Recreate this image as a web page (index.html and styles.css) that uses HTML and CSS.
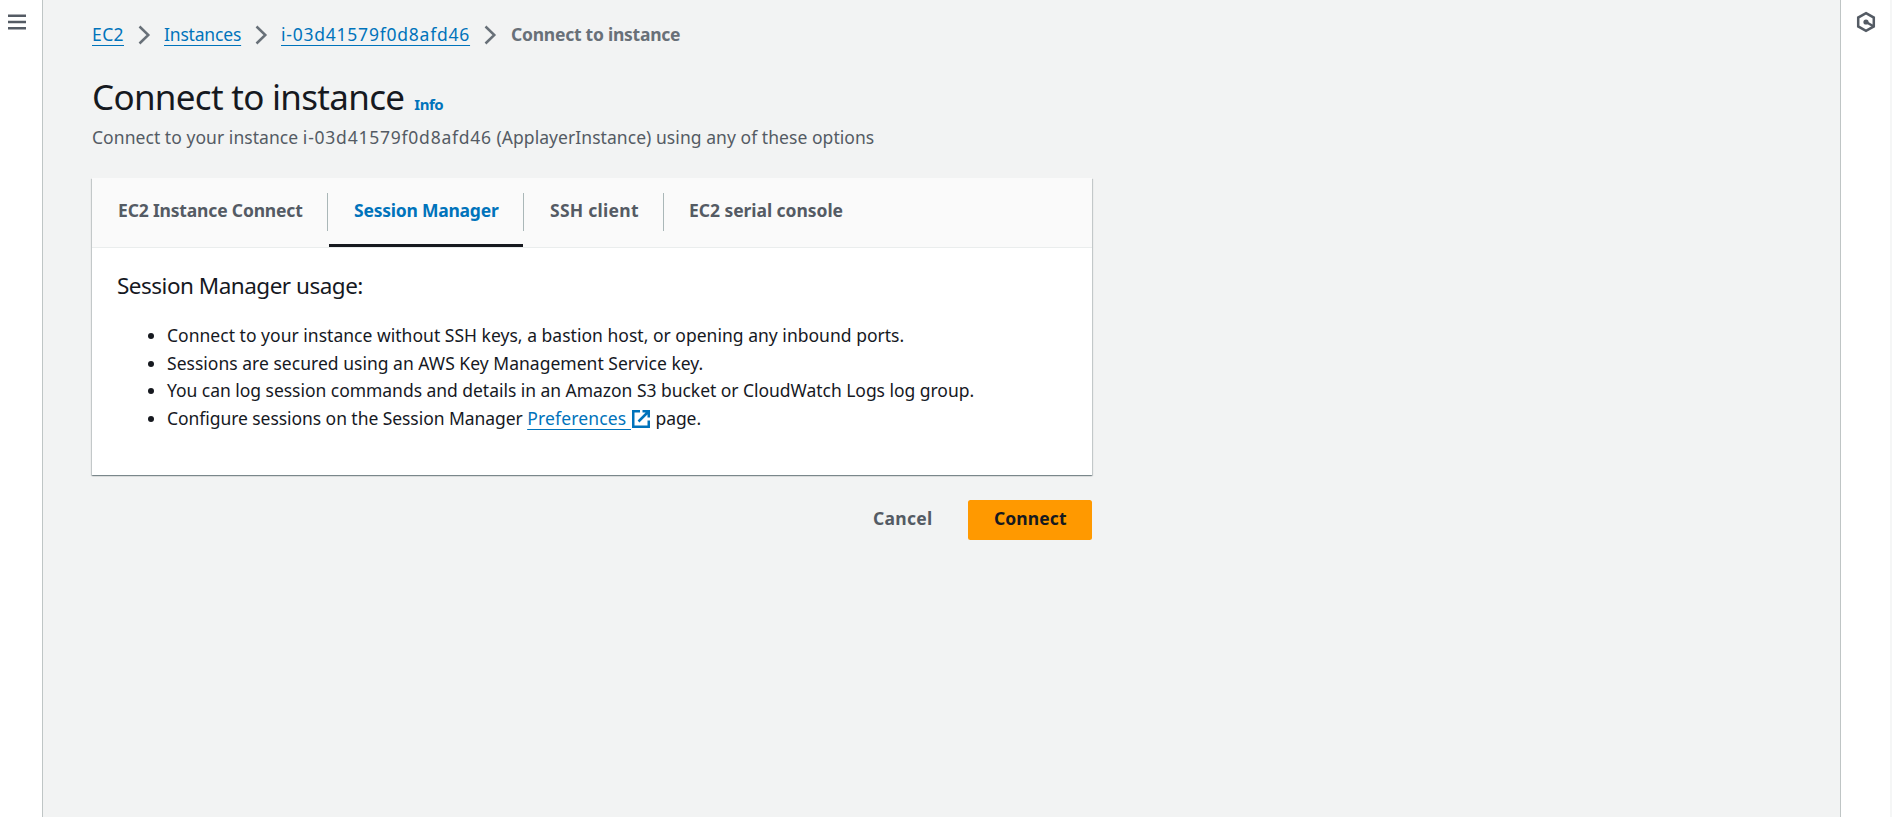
FILE: index.html
```html
<!DOCTYPE html>
<html lang="en">
<head>
<meta charset="utf-8">
<title>Connect to instance</title>
<link rel="stylesheet" href="styles.css">
</head>
<body>
<div class="layout">
  <aside class="rail rail-left">
    <svg class="menu-icon" width="18" height="18" viewBox="0 0 18 18"><path d="M0 1.75h18M0 8h18M0 14.25h18"/></svg>
  </aside>
  <main class="main">
    <nav class="crumbs">
      <a class="link crumb-ec2">EC2</a>
      <svg class="chevron" width="13" height="20" viewBox="0 0 13 20"><path d="M1.5 1.5L10.3 10L1.5 18.5"/></svg>
      <a class="link crumb-instances">Instances</a>
      <svg class="chevron" width="13" height="20" viewBox="0 0 13 20"><path d="M1.5 1.5L10.3 10L1.5 18.5"/></svg>
      <a class="link instance-id">i-03d41579f0d8afd46</a>
      <svg class="chevron" width="13" height="20" viewBox="0 0 13 20"><path d="M1.5 1.5L10.3 10L1.5 18.5"/></svg>
      <span class="crumb-current">Connect to instance</span>
    </nav>
    <header class="heading">
      <h1 class="title">Connect to instance</h1>
      <a class="info">Info</a>
    </header>
    <p class="description">Connect to your instance <span class="instance-id">i-03d41579f0d8afd46</span> (ApplayerInstance) using any of these options</p>
    <section class="panel">
      <div class="tabs">
        <div class="tab tab-eic">EC2 Instance Connect</div>
        <div class="tab tab-session active">Session Manager</div>
        <div class="tab tab-ssh">SSH client</div>
        <div class="tab tab-serial">EC2 serial console</div>
      </div>
      <div class="panel-body">
        <h2 class="subtitle">Session Manager usage:</h2>
        <ul class="usage">
          <li>Connect to your instance without SSH keys, a bastion host, or opening any inbound ports.</li>
          <li>Sessions are secured using an AWS Key Management Service key.</li>
          <li class="usage-log">You can log session commands and details in an Amazon S3 bucket or CloudWatch Logs log group.</li>
          <li class="usage-prefs">Configure sessions on the Session Manager <a class="link prefs">Preferences&nbsp;</a><svg class="external" width="18" height="18" viewBox="0 0 18 18"><path d="M8 1.25H1.25V16.75H16.75V10.5M10.5 1.25H16.75V7.5M16.5 1.5L6.5 11.5"/></svg> page.</li>
        </ul>
      </div>
    </section>
    <div class="actions">
      <button class="btn btn-link">Cancel</button>
      <button class="btn btn-primary">Connect</button>
    </div>
  </main>
  <aside class="rail rail-right">
    <svg class="hex-icon" width="20" height="22" viewBox="0 0 20 22"><path d="M10 2.2L17.8 6.6V15.4L10 19.8L2.2 15.4V6.6Z"/><path d="M10 11L17 15"/><circle cx="10" cy="11" r="2.6"/></svg>
  </aside>
</div>
</body>
</html>
```
FILE: styles.css
```css
* { box-sizing: border-box; }
body {
  margin: 0;
  background: #f2f3f3;
  color: #16191f;
  font: 17.5px/27.5px "Noto Sans", sans-serif;
}
.layout { display: flex; height: 817px; overflow: hidden; }
.rail { flex: none; background: #fff; }
.rail-left { width: 43px; border-right: 1px solid #bfc5c5; padding: 14px 0 0 8px; }
.rail-right { width: 52px; border-left: 1px solid #bfc5c5; border-right: 2px solid #f5f6f6; padding: 11px 0 0 15px; }
.menu-icon, .hex-icon { display: block; fill: none; stroke: #545b64; stroke-width: 2.5; }
.hex-icon circle { fill: #545b64; stroke: none; }
.main { flex: 1; padding: 21px 0 0 49px; }

.crumbs { display: flex; align-items: center; white-space: nowrap; }
.chevron { flex: none; margin: 1px 13.5px 0; fill: none; stroke: #687078; stroke-width: 2.5; }
.link {
  color: #0073bb;
  text-decoration: underline;
  text-decoration-thickness: 1px;
  text-underline-offset: 4px;
  text-decoration-skip-ink: none;
}
.crumb-ec2 { width: 32px; letter-spacing: .4px; }
.crumb-instances { width: 77px; letter-spacing: -.18px; }
.instance-id { letter-spacing: .77px; }
.crumb-current { margin-left: 1px; color: #687078; font-weight: 700; letter-spacing: -.25px; }

.heading { display: flex; align-items: baseline; margin-top: 25px; height: 45px; }
.title { margin: 0; font-size: 35px; line-height: 45px; font-weight: 400; letter-spacing: -.7px; white-space: nowrap; }
.info { margin-left: 10px; color: #0073bb; font-size: 15px; font-weight: 700; letter-spacing: -.5px; }
.description { margin: 5.5px 0 0; color: #545b64; letter-spacing: .055px; }

.panel {
  width: 1000px;
  height: 297px;
  margin-top: 26.5px;
  background: #fff;
  box-shadow: 0 1px 1px 0 rgba(0, 28, 36, .3), 1px 1px 1px 0 rgba(0, 28, 36, .15), -1px 1px 1px 0 rgba(0, 28, 36, .15);
}
.tabs { display: flex; height: 70px; background: #fafafa; border-bottom: 1px solid #eaeded; }
.tab {
  position: relative;
  padding: 19px 0 0 26px;
  color: #545b64;
  font-weight: 700;
  white-space: nowrap;
}
.tab:not(:last-child)::after {
  content: "";
  position: absolute;
  right: 0;
  top: 15px;
  width: 1px;
  height: 38px;
  background: #aab7b8;
}
.tab.active { color: #0073bb; }
.tab.active::before {
  content: "";
  position: absolute;
  left: 1px;
  right: 1px;
  bottom: 0;
  height: 3px;
  background: #16191f;
}
.tab-eic { width: 236px; letter-spacing: -.17px; }
.tab-session { width: 196px; letter-spacing: -.23px; }
.tab-ssh { width: 140px; letter-spacing: .27px; }
.tab-serial { padding-left: 25px; letter-spacing: -.05px; }

.panel-body { padding: 23.5px 25px 0; }
.subtitle { margin: 0; font-size: 22.5px; line-height: 27.5px; font-weight: 400; letter-spacing: -.5px; }
.usage { margin: 23px 0 0; padding-left: 50px; letter-spacing: .02px; white-space: nowrap; }
.usage li::marker { letter-spacing: 0; }
.usage-log { letter-spacing: -.035px; }
.usage-prefs { letter-spacing: -.06px; }
.prefs { letter-spacing: .15px; }
.external { margin: 0 1px; vertical-align: -3.5px; fill: none; stroke: #0073bb; stroke-width: 2.5; }

.actions { display: flex; justify-content: flex-end; width: 1000px; margin-top: 25px; }
.btn {
  height: 40px;
  padding: 0 26px 2px;
  border: 0;
  border-radius: 2.5px;
  background: none;
  color: #545b64;
  font: 700 17.5px/27.5px "Noto Sans", sans-serif;
  letter-spacing: .3px;
}
.btn-link { margin-right: 9.5px; }
.btn-primary { width: 124px; background: #ff9900; color: #16191f; letter-spacing: .1px; }
```
